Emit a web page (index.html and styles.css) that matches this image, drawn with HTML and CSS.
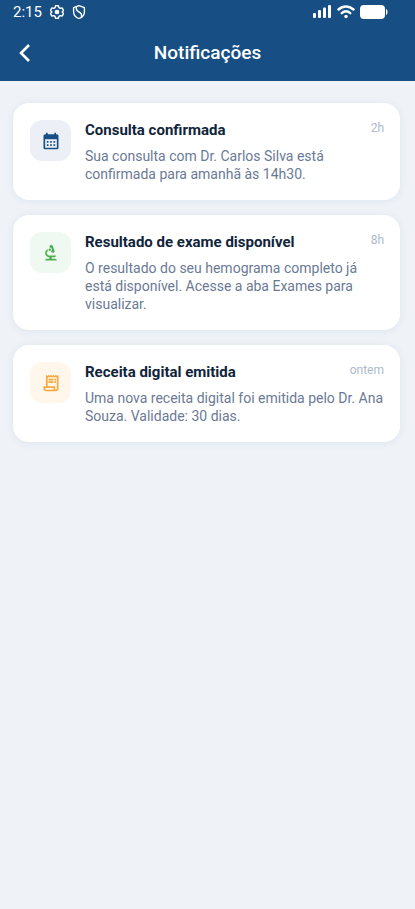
FILE: index.html
```html
<!DOCTYPE html>
<html lang="pt-BR">
<head>
<meta charset="utf-8">
<meta name="viewport" content="width=device-width, initial-scale=1">
<title>Notificações</title>
<link rel="stylesheet" href="styles.css">
</head>
<body>
<header class="top">
  <div class="status">
    <span class="clock">2:15</span>
    <svg class="status-icon" viewBox="1 1 22 22" width="14" height="14" fill="none" stroke="currentColor" stroke-width="2.2" stroke-linejoin="round" aria-hidden="true">
      <path d="M9.700 2.200h4.600l.7 3 2 1.200 3-.9 2.300 4-2.300 2.500 2.300 2.500-2.300 4-3-.9-2 1.200-.7 3H9.700l-.7-3-2-1.200-3 .9-2.300-4L4 12 1.700 9.500l2.300-4 3 .9 2-1.200z"/>
      <circle cx="12" cy="12" r="2.600" fill="currentColor"/>
    </svg>
    <svg class="status-icon" viewBox="1 1 22 22" width="14" height="14" fill="none" stroke="currentColor" stroke-width="2.200" stroke-linejoin="round" aria-hidden="true">
      <path d="M12 2l8.500 3v6.500c0 5-3.500 9-8.500 10.800-5-1.800-8.500-5.800-8.500-10.800V5z"/>
      <path d="M8 4c-1 4 0 6 4 8s5 4.500 3.500 8"/>
    </svg>
    <span class="spacer"></span>
    <svg viewBox="0 0 19 14" width="19" height="14" fill="currentColor" aria-hidden="true">
      <rect x="0" y="8" width="3" height="5" rx="1"/>
      <rect x="5" y="5" width="3" height="8" rx="1"/>
      <rect x="10" y="2.500" width="3" height="10.500" rx="1"/>
      <rect x="15" y="0" width="3" height="13" rx="1"/>
    </svg>
    <svg viewBox="0 0 18 14" width="18" height="14" fill="none" stroke="currentColor" stroke-width="2.400" stroke-linecap="round" aria-hidden="true">
      <path d="M1.500 4.500c4.500-4 10.500-4 15 0"/>
      <path d="M4.700 8.200c2.700-2.300 5.900-2.300 8.600 0"/>
      <circle cx="9" cy="11.500" r="1.700" fill="currentColor" stroke="none"/>
    </svg>
    <svg viewBox="0 0 28 14" width="28" height="14" fill="currentColor" aria-hidden="true">
      <rect x="0" y="0" width="25" height="14" rx="4"/>
      <path d="M26 4c2 .3 2 5.700 0 6z"/>
    </svg>
  </div>
  <div class="bar">
    <button class="back" type="button" aria-label="Voltar">
      <svg viewBox="0 0 24 24" width="24" height="24" fill="none" stroke="currentColor" stroke-width="2.600" aria-hidden="true"><path d="M17 4l-8 8 8 8"/></svg>
    </button>
    <h1 class="title">Notificações</h1>
  </div>
</header>
<main class="list">
  <article class="card">
    <div class="tile blue">
      <svg viewBox="0 0 24 24" width="20" height="20" fill="currentColor" aria-hidden="true"><path d="M19 4h-1V2h-2v2H8V2H6v2H5c-1.110 0-1.990.9-1.990 2L3 20c0 1.100.890 2 2 2h14c1.100 0 2-.9 2-2V6c0-1.100-.9-2-2-2zm0 16H5V10h14v10zM9 14H7v-2h2v2zm4 0h-2v-2h2v2zm4 0h-2v-2h2v2zm-8 4H7v-2h2v2zm4 0h-2v-2h2v2zm4 0h-2v-2h2v2z"/></svg>
    </div>
    <div class="content">
      <div class="head"><h2 class="name">Consulta confirmada</h2><time class="when">2h</time></div>
      <p class="text">Sua consulta com Dr. Carlos Silva está confirmada para amanhã às 14h30.</p>
    </div>
  </article>
  <article class="card">
    <div class="tile green">
      <svg viewBox="0 0 24 24" width="20" height="20" fill="currentColor" aria-hidden="true"><path d="M7 19c-1.100 0-2 .9-2 2h14c0-1.100-.9-2-2-2h-4v-2h3c1.100 0 2-.9 2-2h-8c-1.660 0-3-1.340-3-3 0-1.090.590-2.040 1.460-2.560C8.170 9.030 8 8.540 8 8c0-.210.040-.420.090-.620C6.280 8.130 5 9.920 5 12c0 2.760 2.240 5 5 5v2H7z"/><path d="M10.560 5.510C11.910 5.540 13 6.640 13 8c0 .750-.330 1.410-.850 1.870l.590 1.620.940-.340.340.940 1.880-.680-.340-.940.940-.340L13.760 2.600l-.940.340L12.480 2 10.600 2.680l.340.940-.940.350.560 1.540z"/><circle cx="10.500" cy="8" r="1.500"/></svg>
    </div>
    <div class="content">
      <div class="head"><h2 class="name">Resultado de exame disponível</h2><time class="when">8h</time></div>
      <p class="text">O resultado do seu hemograma completo já está disponível. Acesse a aba Exames para visualizar.</p>
    </div>
  </article>
  <article class="card">
    <div class="tile orange">
      <svg viewBox="0 0 24 24" width="20" height="20" fill="currentColor" aria-hidden="true"><path d="M19.500 3.500L18 2l-1.500 1.500L15 2l-1.500 1.500L12 2l-1.500 1.500L9 2 7.500 3.500 6 2v14H3v3c0 1.660 1.340 3 3 3h12c1.660 0 3-1.340 3-3V2l-1.500 1.500zM15 20H6c-.550 0-1-.450-1-1v-1h10v2zm4-1c0 .550-.450 1-1 1s-1-.450-1-1v-3H8V5h11v14z"/><path d="M9 7h6v2H9zM16 7h2v2h-2zM9 10h6v2H9zM16 10h2v2h-2z"/></svg>
    </div>
    <div class="content">
      <div class="head"><h2 class="name">Receita digital emitida</h2><time class="when">ontem</time></div>
      <p class="text">Uma nova receita digital foi emitida pelo Dr. Ana Souza. Validade: 30 dias.</p>
    </div>
  </article>
</main>
</body>
</html>
```
FILE: styles.css
```css
* {
  box-sizing: border-box;
}

body {
  margin: 0;
  min-height: 100vh;
  background: #eff3f8;
  font-family: Roboto, "Liberation Sans", sans-serif;
}

h1, h2, p {
  margin: 0;
}

svg {
  display: block;
  flex: none;
}

.top {
  background: #174f85;
  color: #fff;
}

.status {
  display: flex;
  align-items: center;
  gap: 5px;
  height: 24px;
  padding: 0 27px 0 13px;
}

.clock {
  font-size: 15px;
  line-height: 24px;
}

.status-icon {
  margin-left: 3px;
}

.spacer {
  flex: 1;
}

.bar {
  display: grid;
  grid-template-columns: 48px 1fr 48px;
  align-items: center;
  height: 57px;
}

.back {
  display: flex;
  justify-content: center;
  padding: 12px 0;
  border: 0;
  background: none;
  color: inherit;
}

.title {
  font-size: 19px;
  line-height: 24px;
  font-weight: 500;
  text-align: center;
}

.list {
  display: flex;
  flex-direction: column;
  gap: 15px;
  padding: 22px 15px 22px 13px;
}

.card {
  display: flex;
  align-items: flex-start;
  gap: 14px;
  padding: 17px 16px 17px 17px;
  border-radius: 16px;
  background: #fff;
  box-shadow: 0 1px 8px rgba(23, 60, 110, 0.08);
}

.tile {
  display: grid;
  place-items: center;
  flex: none;
  width: 41px;
  height: 41px;
  border-radius: 12px;
}

.blue {
  background: #ecf0f6;
  color: #174f85;
}

.green {
  background: #f0f9f1;
  color: #4caf50;
}

.orange {
  background: #fff7ec;
  color: #f6a83c;
}

.content {
  flex: 1;
  min-width: 0;
}

.head {
  display: flex;
  justify-content: space-between;
  margin-bottom: 7px;
}

.name {
  color: #10243a;
  font-size: 15px;
  line-height: 20px;
  font-weight: 700;
}

.when {
  color: #acb9ca;
  font-size: 12px;
  line-height: 16px;
}

.text {
  color: #6a7a94;
  font-size: 14px;
  line-height: 18px;
}
```
